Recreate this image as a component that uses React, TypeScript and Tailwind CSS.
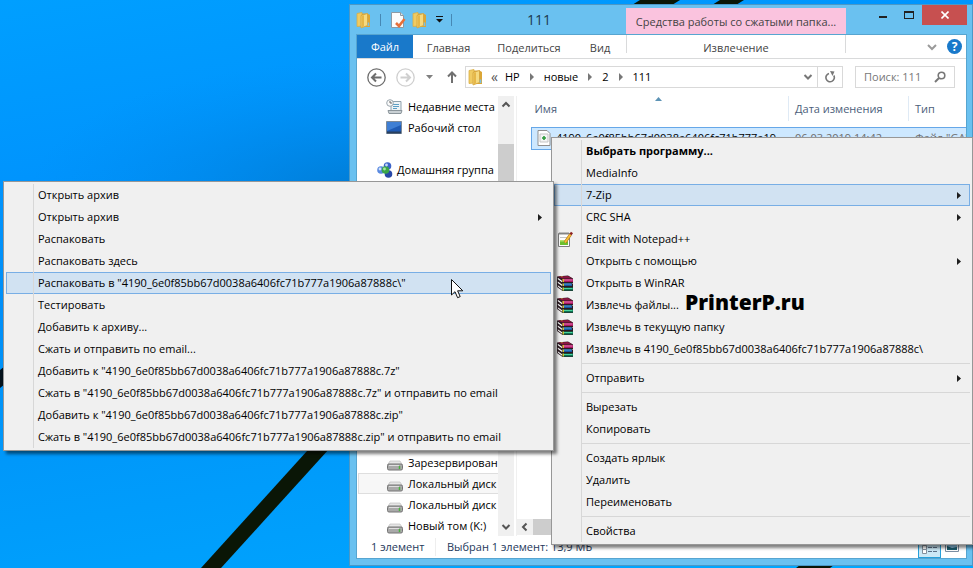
import type { ReactNode } from 'react';

type MenuEntry = {
    label: string;
    icon?: ReactNode;
    bold?: boolean;
    arrow?: boolean;
    active?: boolean;
    separatorBefore?: boolean;
};

function FolderIcon() {
    return (
        <svg width="15" height="18" viewBox="0 0 15 18" className="shrink-0">
            <path d="M1 2.500L6 1.500v13.500l-5 .5z" fill="#f0cb62" stroke="#d9ad45" strokeWidth=".8" />
            <path d="M6 2.500h5.500L14 4v12H6z" fill="#dba636" />
            <path d="M5 4.500l6.500-2v12L5 17z" fill="#f6da80" stroke="#d3a23a" strokeWidth=".8" />
            <path d="M5.500 5l2.500-.8v11.300l-2.500 1z" fill="#e6b748" />
            <path d="M12.500 11.500V15" stroke="#7cc0e2" strokeWidth="1.600" />
        </svg>
    );
}

function PropertiesIcon() {
    return (
        <svg width="16" height="18" viewBox="0 0 16 18" className="shrink-0">
            <path d="M1.500 1.500h9l3 3v12h-12z" fill="#fcfcfc" stroke="#8d9aa5" />
            <path d="M10.500 1.500v3h3" fill="#dfe5ea" stroke="#8d9aa5" />
            <path d="M6 12l3 3 5.500-7" fill="none" stroke="#e8703a" strokeWidth="2.600" />
        </svg>
    );
}

function WinrarIcon() {
    return (
        <svg width="17" height="17" viewBox="0 0 17 17" className="shrink-0">
            <path d="M0 1.500L11 .5l5 3V8l-1 .5 1 .5v7H5.500L0 12z" fill="#2a1a20" />
            <path d="M1 1.500l10-.5 4.500 2.500H5z" fill="#8a1440" />
            <path d="M5.500 4H16v3H5.500z" fill="#a81560" />
            <path d="M7 4.500h8.500v1H7z" fill="#ea78b4" />
            <path d="M5.500 8.500H15v2.500H5.500z" fill="#16559c" />
            <path d="M7 8.500h7.500v1H7z" fill="#4fa4e4" />
            <path d="M5.500 12.500H16v3H5.500z" fill="#0d7352" />
            <path d="M7 13h8.500v1H7z" fill="#48d39c" />
            <path d="M.8 2.800L5 5.800v1.400L.8 4.300zM.8 6.500L5 9.500V11L.8 8zM.8 10.200L5 13.300v1.500L.8 11.600z" fill="#fafafa" />
            <path d="M3.500 1.500l2-.2v1zM5.500 4H7v3H5.500zM5.500 8.500H7V11H5.500zM5.500 12.500H7v3H5.500z" fill="#d3c030" />
        </svg>
    );
}

function NotepadIcon() {
    return (
        <svg width="17" height="17" viewBox="0 0 17 17" className="shrink-0">
            <path d="M1.500 2.500h11v13h-11z" fill="#fdfdfd" stroke="#7e7e7e" />
            <path d="M3 1v3M5 1v3M7 1v3M9 1v3M11 1v3" stroke="#8a8a8a" />
            <path d="M3 6.500h7" stroke="#c4c4c4" />
            <path d="M3 9h8v5H3z" fill="#6cc02e" />
            <path d="M3 9h8v1.500H3z" fill="#b6e26c" />
            <path d="M8 11.500l5.500-8" stroke="#b06f12" strokeWidth="3" />
            <path d="M8 11.500l5.500-8" stroke="#f8bf36" strokeWidth="1.800" />
            <path d="M13.500 3.500l1.500-2" stroke="#8b1f1f" strokeWidth="2.500" />
        </svg>
    );
}

function RecentIcon() {
    return (
        <svg width="17" height="16" viewBox="0 0 17 16" className="shrink-0">
            <path d="M5 2.500h10v9H5z" fill="#eef3f6" stroke="#8fa1ad" />
            <path d="M7 5.500h6M7 7.500h6M7 9.500h4" stroke="#5d9fc5" />
            <path d="M2 11.500h14l-1 3H3z" fill="#c9d0d4" stroke="#8b959b" />
            <circle cx="4" cy="4" r="3.300" fill="#fafafa" stroke="#9ba6ad" />
            <path d="M4 2v2h2" fill="none" stroke="#666" />
        </svg>
    );
}

function DesktopIcon() {
    return (
        <svg width="16" height="13" viewBox="0 0 16 13" className="shrink-0">
            <path d="M.5.5h15v12H.5z" fill="#1f5bb5" stroke="#7d8a98" />
            <path d="M1 1h14v3L1 10z" fill="#3f7fd4" />
            <path d="M1 10.500h14v2H1z" fill="#29405f" />
        </svg>
    );
}

function HomegroupIcon() {
    return (
        <svg width="16" height="16" viewBox="0 0 16 16" className="shrink-0">
            <circle cx="10.500" cy="4" r="3.800" fill="#3c63c8" />
            <circle cx="4" cy="8" r="3.800" fill="#5b8ae0" />
            <circle cx="11.500" cy="12" r="3.800" fill="#2748a8" />
            <circle cx="8.500" cy="8" r="3.800" fill="#3aa648" />
            <circle cx="9.500" cy="3" r="1.400" fill="#c3d8f8" />
            <circle cx="3" cy="7" r="1.400" fill="#d2e2fa" />
            <circle cx="7.500" cy="7" r="1.400" fill="#a9e6a4" />
        </svg>
    );
}

function DriveIcon() {
    return (
        <svg width="16" height="12" viewBox="0 0 16 12" className="mt-1 shrink-0">
            <path d="M3 2h10l2.500 4h-15z" fill="#e6e6e6" stroke="#b5b5b5" strokeWidth=".6" />
            <rect x=".5" y="5" width="15" height="6" rx="1.500" fill="#a9a9a9" stroke="#757575" />
            <path d="M2 6.500h10" stroke="#dedede" />
            <path d="M12.500 7v3" stroke="#49b13f" strokeWidth="1.500" />
        </svg>
    );
}

function SubmenuArrow() {
    return (
        <svg width="4" height="7" viewBox="0 0 4 7" className="shrink-0">
            <path d="M0 0l4 3.500L0 7z" fill="#1e1e1e" />
        </svg>
    );
}

function Chevron({ d, className }: { d: string; className?: string }) {
    return (
        <svg width="10" height="10" viewBox="0 0 10 10" className={className}>
            <path d={d} fill="none" stroke="currentColor" strokeWidth="2" />
        </svg>
    );
}

const archiveMenu: MenuEntry[] = [
    { label: 'Открыть архив' },
    { label: 'Открыть архив', arrow: true },
    { label: 'Распаковать' },
    { label: 'Распаковать здесь' },
    { label: 'Распаковать в "4190_6e0f85bb67d0038a6406fc71b777a1906a87888c\\"', active: true },
    { label: 'Тестировать' },
    { label: 'Добавить к архиву...' },
    { label: 'Сжать и отправить по email...' },
    { label: 'Добавить к "4190_6e0f85bb67d0038a6406fc71b777a1906a87888c.7z"' },
    { label: 'Сжать в "4190_6e0f85bb67d0038a6406fc71b777a1906a87888c.7z" и отправить по email' },
    { label: 'Добавить к "4190_6e0f85bb67d0038a6406fc71b777a1906a87888c.zip"' },
    { label: 'Сжать в "4190_6e0f85bb67d0038a6406fc71b777a1906a87888c.zip" и отправить по email' },
];

const fileMenu: MenuEntry[] = [
    { label: 'Выбрать программу...', bold: true },
    { label: 'MediaInfo' },
    { label: '7-Zip', arrow: true, active: true },
    { label: 'CRC SHA', arrow: true },
    { label: 'Edit with Notepad++', icon: <NotepadIcon /> },
    { label: 'Открыть с помощью', arrow: true },
    { label: 'Открыть в WinRAR', icon: <WinrarIcon /> },
    { label: 'Извлечь файлы...', icon: <WinrarIcon /> },
    { label: 'Извлечь в текущую папку', icon: <WinrarIcon /> },
    { label: 'Извлечь в 4190_6e0f85bb67d0038a6406fc71b777a1906a87888c\\', icon: <WinrarIcon /> },
    { label: 'Отправить', arrow: true, separatorBefore: true },
    { label: 'Вырезать', separatorBefore: true },
    { label: 'Копировать' },
    { label: 'Создать ярлык', separatorBefore: true },
    { label: 'Удалить' },
    { label: 'Переименовать' },
    { label: 'Свойства', separatorBefore: true },
];

const topPlaces = [
    { label: 'Недавние места', icon: <RecentIcon /> },
    { label: 'Рабочий стол', icon: <DesktopIcon /> },
];

const drives = ['Зарезервирован', 'Локальный диск', 'Локальный диск', 'Новый том (K:)'];

function Menu({ entries }: { entries: MenuEntry[] }) {
    return (
        <ul role="menu" className="border border-[#979797] bg-[#f0f0f0] p-[2px] shadow-[3px_3px_3px_rgba(0,0,0,0.5)]">
            {entries.map((entry, i) => (
                <li key={i} role="none">
                    {entry.separatorBefore && (
                        <div className="flex h-[7px] items-center pl-[27px]">
                            <div className="h-full w-px bg-[#d7d7d7]" />
                            <div className="h-px flex-1 bg-[#d7d7d7]" />
                        </div>
                    )}
                    <button
                        role="menuitem"
                        className={`flex h-[22px] w-full items-stretch border text-left ${
                            entry.active ? 'border-[#78aee5] bg-[#d1e2f2]' : 'border-transparent'
                        }`}
                    >
                        <span className="flex w-[26px] shrink-0 items-center pl-[2px]">{entry.icon}</span>
                        <span className="-my-px w-px bg-[#d7d7d7]" />
                        <span
                            className={`flex-1 self-center pl-1 leading-4 whitespace-nowrap ${
                                entry.bold ? 'font-bold' : ''
                            }`}
                        >
                            {entry.label}
                        </span>
                        <span className="flex w-3 items-center">{entry.arrow && <SubmenuArrow />}</span>
                    </button>
                </li>
            ))}
        </ul>
    );
}

function TitleBar() {
    return (
        <div className="flex h-[29px] items-start">
            <div className="flex h-7 items-center pt-px">
                <FolderIcon />
                <span className="mx-[9px] h-3 w-px bg-[#4688b4]" />
                <PropertiesIcon />
                <span className="w-[6px]" />
                <FolderIcon />
                <button aria-label="Настройка панели" className="ml-1 flex w-4 justify-center">
                    <svg width="7" height="7" viewBox="0 0 7 7">
                        <path d="M0 0h7v1H0zM0 3h7L3.500 6.500z" fill="#111" />
                    </svg>
                </button>
                <span className="ml-1 h-3 w-px bg-[#4688b4]" />
            </div>
            <h1 className="flex-1 self-center text-center text-[14px] leading-5 text-[#1c3a4c]">111</h1>
            <div className="mt-[3px] flex h-[26px] w-[220px] items-center justify-center bg-[#fac3de] pt-px text-[#444]">
                Средства работы со сжатыми папка...
            </div>
            <div className="flex h-5 w-[121px] justify-end">
                <button aria-label="Свернуть" className="flex w-[26px] items-center justify-center">
                    <span className="mt-1 h-[2px] w-2 bg-[#222]" />
                </button>
                <button aria-label="Развернуть" className="flex w-[26px] items-center justify-center">
                    <span className="h-2 w-[10px] border border-t-2 border-[#222]" />
                </button>
                <button aria-label="Закрыть" className="flex w-[45px] items-center justify-center bg-[#c75050]">
                    <svg width="8" height="8" viewBox="0 0 8 8">
                        <path d="M.5.5l7 7M7.500.5l-7 7" stroke="#fff" strokeWidth="1.600" />
                    </svg>
                </button>
            </div>
        </div>
    );
}

function Ribbon() {
    return (
        <div className="flex h-6 items-center border-b border-[#d9dadb] text-[#444]">
            <button className="h-full w-14 bg-[#1979ca] text-white">Файл</button>
            <button className="w-[71px] pt-[2px]">Главная</button>
            <button className="w-[90px] pt-[2px]">Поделиться</button>
            <button className="w-[52px] pt-[2px]">Вид</button>
            <button className="ml-auto h-[18px] w-[220px] self-start border-x border-[#d9dadb] pt-1">Извлечение</button>
            <div className="flex w-[120px] items-center justify-end gap-[10px] pr-1">
                <button aria-label="Свернуть ленту" className="text-[#9a9a9a]">
                    <Chevron d="M1 3l4 4 4-4" className="block" />
                </button>
                <button
                    aria-label="Справка"
                    className="flex size-[15px] items-center justify-center rounded-full bg-[#1979ca] text-[12px] leading-none font-bold text-white"
                >
                    ?
                </button>
            </div>
        </div>
    );
}

function AddressBar() {
    const crumbs = ['HP', 'новые', '2', '111'];
    return (
        <div className="flex h-9 items-center pr-[11px] pl-[10px]">
            <button aria-label="Назад" className="mr-[10px] text-[#6d6d6d]">
                <svg width="19" height="19" viewBox="0 0 19 19" fill="none" stroke="currentColor">
                    <circle cx="9.500" cy="9.500" r="8.700" strokeWidth="1.300" />
                    <path d="M14.500 9.500h-9M9 5.500l-4 4 4 4" strokeWidth="2" />
                </svg>
            </button>
            <button aria-label="Вперед" className="text-[#cfcfcf]">
                <svg width="19" height="19" viewBox="0 0 19 19" fill="none" stroke="currentColor">
                    <circle cx="9.500" cy="9.500" r="8.700" strokeWidth="1.300" />
                    <path d="M4.500 9.500h9M10 5.500l4 4-4 4" strokeWidth="2" />
                </svg>
            </button>
            <button aria-label="Последние расположения" className="ml-[11px]">
                <svg width="7" height="4" viewBox="0 0 7 4">
                    <path d="M0 0h7L3.500 4z" fill="#808080" />
                </svg>
            </button>
            <button aria-label="Вверх" className="mr-2 ml-[14px]">
                <svg width="10" height="12" viewBox="0 0 10 12">
                    <path d="M5 12V2M1 5.500l4-4 4 4" fill="none" stroke="#707070" strokeWidth="2" />
                </svg>
            </button>
            <div className="flex h-[22px] flex-1 items-center border border-[#d9d9d9] pl-[2px]">
                <FolderIcon />
                <span className="mr-[7px] ml-2 text-[14px] text-[#555]">«</span>
                {crumbs.map((crumb, i) => (
                    <span key={crumb} className="flex items-center">
                        <button>{crumb}</button>
                        {i < crumbs.length - 1 && (
                            <svg width="4" height="8" viewBox="0 0 4 8" className="mx-[10px]">
                                <path d="M0 0l4 4-4 4z" fill="#777" />
                            </svg>
                        )}
                    </span>
                ))}
                <button aria-label="Предыдущие расположения" className="mr-1 ml-auto text-[#777]">
                    <Chevron d="M1.500 3L5 6.500 8.500 3" className="block" />
                </button>
                <button
                    aria-label="Обновить"
                    className="flex h-full w-[25px] items-center justify-center border-l border-[#d9d9d9]"
                >
                    <svg width="12" height="12" viewBox="0 0 12 12">
                        <path d="M9.800 4.500A4.200 4.200 0 1 1 5 2.500" fill="none" stroke="#777" strokeWidth="1.600" />
                        <path d="M6 0l4.500.5L8.500 5z" fill="#777" />
                    </svg>
                </button>
            </div>
            <label className="ml-3 flex h-[22px] w-[100px] items-center border border-[#d9d9d9] px-2">
                <input
                    aria-label="Поиск"
                    placeholder="Поиск: 111"
                    className="w-full min-w-0 outline-none placeholder:text-[#777]"
                />
                <svg width="12" height="12" viewBox="0 0 12 12" className="shrink-0">
                    <circle cx="7.500" cy="4.500" r="3.300" fill="none" stroke="#777" strokeWidth="1.600" />
                    <path d="M5 7l-4 4" stroke="#777" strokeWidth="2" />
                </svg>
            </label>
        </div>
    );
}

function NavigationPane() {
    return (
        <div className="flex w-[157px] shrink-0">
            <nav className="flex min-w-0 flex-1 flex-col justify-between overflow-hidden pl-px whitespace-nowrap">
                <div>
                    {topPlaces.map(({ label, icon }) => (
                        <a key={label} href="#" className="flex h-[21px] items-center pl-7">
                            <span className="flex w-[22px] shrink-0">{icon}</span>
                            {label}
                        </a>
                    ))}
                    <a href="#" className="mt-[21px] flex h-[21px] items-center gap-1 pl-[19px]">
                        <HomegroupIcon />
                        Домашняя группа
                    </a>
                </div>
                <div>
                    {drives.map((label, i) => (
                        <a
                            key={i}
                            href="#"
                            className={`flex h-[21px] items-center border-y border-l pl-7 ${
                                i === 1 ? 'border-[#dedede] bg-[#f7f7f7]' : 'border-transparent'
                            }`}
                        >
                            <span className="flex w-[21px] shrink-0">
                                <DriveIcon />
                            </span>
                            {label}
                        </a>
                    ))}
                </div>
            </nav>
            <div className="flex w-4 flex-col items-center bg-[#f0f0f0] text-[#555]">
                <Chevron d="M1.500 6.500L5 3l3.500 3.500" className="my-1" />
                <div className="mt-[30px] h-60 w-full bg-[#cdcdcd]" />
                <Chevron d="M1.500 3L5 6.500 8.500 3" className="mt-auto mb-1" />
            </div>
        </div>
    );
}

function FileList() {
    return (
        <div className="ml-[2px] flex min-w-0 flex-1 flex-col overflow-hidden border-l border-[#f0f0f0]">
            <div className="relative flex-1 pl-[14px]">
                <svg width="7" height="4" viewBox="0 0 7 4" className="absolute top-px left-[138px]">
                    <path d="M0 4l3.500-4L7 4z" fill="#5d93b5" />
                </svg>
                <table className="w-full table-fixed border-collapse text-left whitespace-nowrap">
                    <thead className="text-[#4c607a]">
                        <tr className="h-[31px] align-top">
                            <th className="pt-1 pl-[3px] font-normal">Имя</th>
                            <th className="w-[120px] p-0 font-normal">
                                <div className="border-l border-[#dfeaf5] pt-1 pb-[3px] pl-[6px]">Дата изменения</div>
                            </th>
                            <th className="w-[58px] p-0 font-normal">
                                <div className="border-l border-[#dfeaf5] pt-1 pb-[3px] pl-[6px]">Тип</div>
                            </th>
                        </tr>
                    </thead>
                    <tbody>
                        <tr className="h-[22px] bg-[#cde8ff] text-[#6d6d6d]">
                            <td className="border-y border-l border-[#66a7e8] p-0 text-black">
                                <div className="flex items-center gap-[5px] pl-[5px]">
                                    <svg width="14" height="16" viewBox="0 0 14 16" className="shrink-0">
                                        <path d="M1 .5h9l3 3v12H1z" fill="#fff" stroke="#8f8f8f" />
                                        <path d="M3 4h8v8H3z" fill="#f4f4f4" stroke="#c5c5c5" />
                                        <path d="M7 6v4M5 8h4" stroke="#2f9b3c" strokeWidth="1.600" />
                                    </svg>
                                    4190_6e0f85bb67d0038a6406fc71b777a19...
                                </div>
                            </td>
                            <td className="border-y border-[#66a7e8] p-0 pl-[7px]">06.03.2019 14:42</td>
                            <td className="overflow-hidden border-y border-[#66a7e8] p-0 pl-[7px]">Файл "GA"</td>
                        </tr>
                    </tbody>
                </table>
            </div>
            <div className="mb-px flex h-4 items-center bg-[#f0f0f0] text-[#555]">
                <Chevron d="M6.500 1.500L3 5l3.500 3.500" className="mx-[3px]" />
                <div className="h-full w-72 bg-[#cdcdcd]" />
            </div>
        </div>
    );
}

function StatusBar() {
    return (
        <div className="flex h-[22px] items-center pl-[14px] text-[#1e395b]">
            <span className="w-16">1 элемент</span>
            <span className="border-l border-[#eee] pl-[11px]">Выбран 1 элемент: 13,9 МБ</span>
            <div className="ml-auto flex h-full items-end gap-1 pr-[7px]">
                <button aria-label="Таблица" className="border border-[#26a0da] bg-[#cbe8f6] p-[3px]">
                    <svg width="15" height="14" viewBox="0 0 15 14">
                        <path d="M.5.5h4v4h-4zM.5 5.500h4v4h-4zM.5 9.500h4v4h-4z" fill="#fff" stroke="#84909c" />
                        <path d="M6 2.500h9M6 7.500h9M6 11.500h9" stroke="#5c7088" strokeDasharray="4 1" />
                    </svg>
                </button>
                <button aria-label="Крупные значки" className="pb-[6px]">
                    <svg width="14" height="13" viewBox="0 0 14 13">
                        <path d="M.5.5h13v12H.5z" fill="#fff" stroke="#7b8ea3" />
                        <path d="M2 2h10v9H2z" fill="#8fc6e8" />
                        <path d="M2 7l5 2 5-1v3H2z" fill="#1b5c6e" />
                    </svg>
                </button>
            </div>
        </div>
    );
}

function ExplorerWindow() {
    return (
        <section className="flex h-full flex-col border border-[#4b98c6] bg-[#6ac1f0] pr-[5px] pb-[6px] pl-[6px]">
            <TitleBar />
            <div className="flex min-h-0 flex-1 flex-col border border-[#57a5d0] bg-white">
                <Ribbon />
                <AddressBar />
                <div className="flex min-h-0 flex-1 pt-px">
                    <NavigationPane />
                    <FileList />
                </div>
                <StatusBar />
            </div>
        </section>
    );
}

function Wallpaper() {
    return (
        <svg
            className="absolute inset-0 h-full w-full"
            viewBox="0 0 973 568"
            preserveAspectRatio="none"
            aria-hidden="true"
        >
            <defs>
                <radialGradient id="shade">
                    <stop offset="0" stopColor="#0072c4" stopOpacity=".7" />
                    <stop offset="1" stopColor="#0088e8" stopOpacity="0" />
                </radialGradient>
            </defs>
            <ellipse cx="370" cy="190" rx="340" ry="130" fill="url(#shade)" />
            <path d="M307 451l42-46v22l-128 141h-20z" fill="#0a1606" />
            <path d="M632 5l8-5h40l-8 5zM712 5l8-5h24l-8 5zM796 568l4-3h34l-4 3z" fill="#0a1606" />
            <path d="M0 370l5-4v18l-5 4z" fill="#04121c" />
        </svg>
    );
}

export default function App() {
    return (
        <main className="relative h-screen overflow-hidden bg-linear-[170deg,#009fff_0%,#0094fd_25%,#008ff8_42%,#009cfb_72%,#00a8ff_100%] font-['Open_Sans','Noto_Sans',sans-serif] text-[11px] leading-[18px] text-black">
            <Wallpaper />
            <div className="absolute top-1 right-0 bottom-[2px] left-[349px]">
                <ExplorerWindow />
            </div>
            <div className="absolute top-[137px] right-0 left-[551px]">
                <Menu entries={fileMenu} />
            </div>
            <div className="absolute top-[181px] left-[3px] w-[551px]">
                <Menu entries={archiveMenu} />
            </div>
            <p className="absolute top-[290px] left-[685px] text-[21px] leading-6 font-extrabold">PrinterP.ru</p>
            <svg width="13" height="20" viewBox="0 0 13 20" className="absolute top-[279px] left-[451px]">
                <path
                    d="M.5.5v15.500l3.500-3.300 2.600 6 2.600-1.100-2.600-5.800h5.200z"
                    fill="#fff"
                    stroke="#111"
                    strokeLinejoin="round"
                />
            </svg>
        </main>
    );
}
